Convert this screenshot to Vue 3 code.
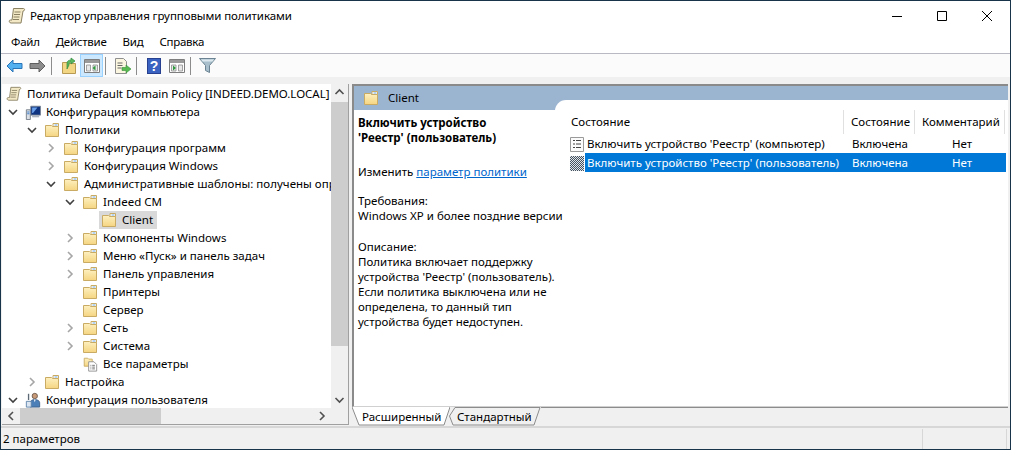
<script setup>
const menus = ['Файл', 'Действие', 'Вид', 'Справка']
const tree = [
  { d: -1, t: 'Политика Default Domain Policy [INDEED.DEMO.LOCAL]', i: 'scroll' },
  { d: 0, t: 'Конфигурация компьютера', i: 'computer', e: 'open' },
  { d: 1, t: 'Политики', i: 'folder', e: 'open' },
  { d: 2, t: 'Конфигурация программ', i: 'folder', e: 'closed' },
  { d: 2, t: 'Конфигурация Windows', i: 'folder', e: 'closed' },
  { d: 2, t: 'Административные шаблоны: получены определения политик', i: 'folder', e: 'open' },
  { d: 3, t: 'Indeed CM', i: 'folder', e: 'open' },
  { d: 4, t: 'Client', i: 'folder', sel: true },
  { d: 3, t: 'Компоненты Windows', i: 'folder', e: 'closed' },
  { d: 3, t: 'Меню «Пуск» и панель задач', i: 'folder', e: 'closed' },
  { d: 3, t: 'Панель управления', i: 'folder', e: 'closed' },
  { d: 3, t: 'Принтеры', i: 'folder' },
  { d: 3, t: 'Сервер', i: 'folder' },
  { d: 3, t: 'Сеть', i: 'folder', e: 'closed' },
  { d: 3, t: 'Система', i: 'folder', e: 'closed' },
  { d: 3, t: 'Все параметры', i: 'allset' },
  { d: 1, t: 'Настройка', i: 'folder', e: 'closed' },
  { d: 0, t: 'Конфигурация пользователя', i: 'user', e: 'open' }
]
const rows = [
  { t: "Включить устройство 'Реестр' (компьютер)", s: 'Включена', c: 'Нет', i: 'setting' },
  { t: "Включить устройство 'Реестр' (пользователь)", s: 'Включена', c: 'Нет', i: 'dither', sel: true }
]
</script>

<template>
  <div class="win">
    <svg class="defs" width="0" height="0" aria-hidden="true">
      <defs>
        <linearGradient id="fg" x1="0" y1="0" x2="0" y2="1">
          <stop offset="0" stop-color="#fdf0c0" />
          <stop offset="1" stop-color="#f5d581" />
        </linearGradient>
        <symbol id="folder" viewBox="0 0 16 16">
          <path d="M9 1.500h5.500v3H9z" fill="#fff" stroke="#c9ab63" />
          <path d="M10.500 2.500h3v1h-3z" fill="#6ba6dc" />
          <path d="M1.500 3.500h6l1 1h6v10h-13z" fill="url(#fg)" stroke="#c9ab63" />
        </symbol>
        <symbol id="scroll" viewBox="0 0 18 18">
          <path d="M5.500 1.500h10c1.500 0 1.500 2.500-.5 2.500l-2 12H3c-2 0-2.500-3-.5-3h1.500z" fill="#f3e9c6" stroke="#8a8163" />
          <path d="M6.500 5h6M6 7.500h6M5.500 10h6M5 12.500h6" stroke="#8a8163" />
        </symbol>
        <symbol id="computer" viewBox="0 0 18 18">
          <path d="M6.500 2.500h11v10h-11z" fill="#10347f" stroke="#7b8594" />
          <path d="M8 4h6l-5 6H8z" fill="#6aa0ea" />
          <path d="M8 13h8v2H8z" fill="#aab2bd" />
          <path d="M1.500 6.500h4.500v11H1.500z" fill="#dbe0e6" stroke="#6d7683" />
          <path d="M2.500 9h2.500M2.500 11h2.500" stroke="#2b6fc4" />
        </symbol>
        <symbol id="user" viewBox="0 0 18 18">
          <circle cx="11" cy="4.500" r="3" fill="#c99a78" stroke="#6d5a4d" />
          <path d="M6 17v-5c0-2 2-3.500 5-3.500s5.500 1.500 5.500 3.500v5z" fill="#4b7fb8" stroke="#3c5f87" />
          <path d="M10 8.500l1 3 1-3z" fill="#fff" />
          <path d="M1.500 10.500h5.500v6.500H1.500z" fill="#dbe6f2" stroke="#5a7fa8" />
          <path d="M4 2v7" stroke="#5d6a76" stroke-width="1.500" />
        </symbol>
        <symbol id="allset" viewBox="0 0 18 18">
          <path d="M2.500 2.500h4l1 1h4v8h-9z" fill="url(#fg)" stroke="#c9ab63" />
          <path d="M7.500 6.500h6l3 3v7.500h-9z" fill="#fff" stroke="#8d8d8d" />
          <path d="M9.500 10.500h1M11.500 10.500h3M9.500 12.500h1M11.500 12.500h3M9.500 14.500h1M11.500 14.500h3" stroke="#666" />
        </symbol>
        <symbol id="setting" viewBox="0 0 14 16">
          <path d="M.5 1.500h13v14H.5z" fill="#fbfbfb" stroke="#9a9a9a" />
          <path d="M3 4.500h2M6 4.500h5M3 8h2M6 8h5M3 11.500h2M6 11.500h5" stroke="#444" />
        </symbol>
        <pattern id="dots" width="2" height="2" patternUnits="userSpaceOnUse">
          <rect width="2" height="2" fill="#dfe4ea" />
          <rect width="1" height="1" fill="#46525e" />
          <rect x="1" y="1" width="1" height="1" fill="#46525e" />
        </pattern>
        <symbol id="dither" viewBox="0 0 14 16">
          <rect y="1" width="14" height="15" fill="url(#dots)" />
        </symbol>
      </defs>
    </svg>

    <header class="title">
      <svg class="title-ico"><use href="#scroll" /></svg>
      <span class="title-text">Редактор управления групповыми политиками</span>
      <div class="controls">
        <svg width="10" height="10" viewBox="0 0 10 10"><path d="M0 5.500h10" stroke="#000" /></svg>
        <svg width="10" height="10" viewBox="0 0 10 10"><path d="M.5.500h9v9h-9z" fill="none" stroke="#000" /></svg>
        <svg width="10" height="10" viewBox="0 0 10 10"><path d="M0 0l10 10M10 0L0 10" stroke="#000" /></svg>
      </div>
    </header>

    <nav class="menu">
      <span v-for="m in menus" :key="m">{{ m }}</span>
    </nav>

    <div class="toolbar">
      <button class="tb">
        <svg width="17" height="14" viewBox="0 0 17 14"><path d="M1 7l6-6v3.500h9v5H7V13z" fill="#52b0f0" stroke="#2a75b8" /></svg>
      </button>
      <button class="tb">
        <svg width="17" height="14" viewBox="0 0 17 14"><path d="M16 7l-6-6v3.500H1v5h9V13z" fill="#8c8c8c" stroke="#5f5f5f" /></svg>
      </button>
      <i class="sep"></i>
      <button class="tb">
        <svg width="16" height="18" viewBox="0 0 16 18"><path d="M1.500 5.500h6l1 1h6v10h-13z" fill="#f3d684" stroke="#b99a52" /><path d="M6 12V6c0-2 2-3 4-3V1l4 3-4 3V5C8 5 8 7 8 8z" fill="#5cb85c" stroke="#2e8b3e" stroke-width=".7" /></svg>
      </button>
      <button class="tb on">
        <svg width="16" height="14" viewBox="0 0 16 14"><path d="M.5.500h15v13H.5z" fill="#fff" stroke="#7e7e7e" /><path d="M1 1h14v3H1z" fill="#9a9a9a" /><path d="M2.500 6h4v6h-4zM9 6h4.500v6H9z" fill="#e8e8e8" stroke="#8d8d8d" stroke-width=".8" /><path d="M11.500 6.500v5L8.500 9z" fill="#2f9a3f" /></svg>
      </button>
      <i class="sep"></i>
      <button class="tb">
        <svg width="17" height="16" viewBox="0 0 17 16"><path d="M1.500.500h8l3 3v12h-11z" fill="#fbf6df" stroke="#8f8f8f" /><path d="M3.500 5h5M3.500 7.500h5M3.500 10h4" stroke="#666" /><path d="M8 9.500h4V7l5 4-5 4v-2.500H8z" fill="#58bb52" stroke="#3a8f3a" stroke-width=".6" /></svg>
      </button>
      <i class="sep"></i>
      <button class="tb">
        <svg width="14" height="16" viewBox="0 0 14 16"><path d="M0 0h14v16H0z" fill="#27408f" /><path d="M1 1h12v14H1z" fill="#3a62c0" /><text x="7" y="13" text-anchor="middle" class="q">?</text></svg>
      </button>
      <button class="tb">
        <svg width="16" height="14" viewBox="0 0 16 14"><path d="M.5.500h15v13H.5z" fill="#fff" stroke="#7e7e7e" /><path d="M1 1h14v3H1z" fill="#9a9a9a" /><path d="M2.500 6h4.500v6H2.500zM9.500 6h4v6h-4z" fill="#e8e8e8" stroke="#8d8d8d" stroke-width=".8" /><path d="M4 6.500v5L7 9z" fill="#2f9a3f" /></svg>
      </button>
      <i class="sep"></i>
      <button class="tb">
        <svg width="17" height="15" viewBox="0 0 17 15"><path d="M.5.500h16l-6 7v7l-4-2v-5z" fill="#a9c0cc" stroke="#6b8392" /><path d="M2 1.500h13l-1.500 2h-10z" fill="#dce8ee" /></svg>
      </button>
    </div>

    <main class="main">
      <section class="tree-pane">
        <div class="tree">
          <div
            v-for="n in tree"
            :key="n.t"
            class="node"
            :style="{ paddingLeft: Math.max(4, 19 * n.d + 4) + 'px' }"
          >
            <span v-if="n.d >= 0" class="exp">
              <svg v-if="n.e === 'open'" width="10" height="10" viewBox="0 0 10 10"><path d="M1 3l4 4 4-4" fill="none" stroke="#404040" stroke-width="1.600" /></svg>
              <svg v-else-if="n.e === 'closed'" width="10" height="10" viewBox="0 0 10 10"><path d="M3 1l4 4-4 4" fill="none" stroke="#a6a6a6" stroke-width="1.600" /></svg>
            </span>
            <span class="cell" :class="{ sel: n.sel }">
              <svg class="ico"><use :href="'#' + n.i" /></svg>
              <span class="label">{{ n.t }}</span>
            </span>
          </div>
        </div>
        <div class="vbar">
          <svg width="17" height="17" viewBox="0 0 17 17"><path d="M4.500 10l4-4 4 4" fill="none" stroke="#505050" stroke-width="1.600" /></svg>
          <div class="vtrack"><div class="vthumb"></div></div>
          <svg width="17" height="17" viewBox="0 0 17 17"><path d="M4.500 7l4 4 4-4" fill="none" stroke="#505050" stroke-width="1.600" /></svg>
        </div>
        <div class="hbar">
          <svg width="18" height="16" viewBox="0 0 18 16"><path d="M11 4L7 8l4 4" fill="none" stroke="#505050" stroke-width="1.600" /></svg>
          <div class="htrack"><div class="hthumb"></div></div>
          <svg width="18" height="16" viewBox="0 0 18 16"><path d="M7 4l4 4-4 4" fill="none" stroke="#505050" stroke-width="1.600" /></svg>
        </div>
        <div class="corner"></div>
      </section>

      <section class="right">
        <div class="pane">
          <div class="pane-head">
            <svg class="ico head-ico"><use href="#folder" /></svg>
            <span>Client</span>
          </div>
          <div class="pane-body">
            <aside class="desc">
              <p class="b">Включить устройство<br />'Реестр' (пользователь)</p>
              <p class="edit">Изменить <a class="link">параметр политики</a></p>
              <p class="req">Требования:<br />Windows XP и более поздние версии</p>
              <p>Описание:<br />Политика включает поддержку<br />устройства 'Реестр' (пользователь).<br />Если политика выключена или не<br />определена, то данный тип<br />устройства будет недоступен.</p>
            </aside>
            <div class="list">
              <div class="lhead">
                <span class="c1">Состояние</span>
                <span class="c2">Состояние</span>
                <span class="c3">Комментарий</span>
              </div>
              <div v-for="r in rows" :key="r.t" class="lrow" :class="{ sel: r.sel }">
                <svg class="lico"><use :href="'#' + r.i" /></svg>
                <div class="lcells">
                  <span class="t">{{ r.t }}</span>
                  <span class="s">{{ r.s }}</span>
                  <span class="k">{{ r.c }}</span>
                </div>
              </div>
            </div>
          </div>
        </div>
        <div class="tabs">
          <span class="tab active">
            <svg class="tab-bg" width="98" height="19" viewBox="0 0 98 19"><path d="M0 0l7 18h85l6-18" fill="#fff" stroke="#8c8c8c" /></svg>
            <span class="tab-t">Расширенный</span>
          </span>
          <span class="tab second">
            <svg class="tab-bg" width="92" height="19" viewBox="0 0 92 19"><path d="M6 .500h85L85 18H4L.5 9z" fill="#f0f0f0" stroke="#8c8c8c" /></svg>
            <span class="tab-t">Стандартный</span>
          </span>
          <span class="tab-rest"></span>
        </div>
      </section>
    </main>

    <footer class="status">
      <span class="st-main">2 параметров</span>
      <span class="st-a"></span>
      <span class="st-b"></span>
    </footer>
  </div>
</template>

<style>
html, body { margin: 0; background: #f0f0f0; }
</style>

<style scoped>
* { box-sizing: border-box; }
.defs { position: absolute; }
.win {
  width: 1011px;
  height: 450px;
  border: 1px solid #17344a;
  background: #f0f0f0;
  display: flex;
  flex-direction: column;
  font: 11.5px/18px "Noto Sans", "Open Sans", sans-serif;
  color: #000;
  overflow: hidden;
}
.title {
  height: 29px;
  background: #fff;
  display: flex;
  align-items: center;
  padding: 1px 0 0 7px;
}
.title-ico { width: 18px; height: 18px; margin-right: 4px; }
.title-text { flex: 1; letter-spacing: -0.08px; }
.controls { display: flex; gap: 35px; padding-right: 18px; }
.menu {
  height: 23px;
  background: #fff;
  display: flex;
  align-items: center;
  gap: 16px;
  padding: 1px 0 0 10px;
  letter-spacing: -0.25px;
}
.toolbar {
  height: 24px;
  background: #fbfbfb;
  border-top: 1px solid #b9b9c4;
  display: flex;
  align-items: center;
  padding-left: 2px;
}
.tb {
  width: 23px;
  height: 23px;
  padding: 0;
  background: none;
  border: 1px solid transparent;
  display: flex;
  align-items: center;
  justify-content: center;
}
.tb.on { background: #cce8ff; border-color: #99d1ff; }
.sep { width: 1px; height: 18px; background: #8c8c8c; margin: 0 5px 0 2px; }
.main { height: 342px; margin-top: 7px; display: flex; }
.tree-pane {
  width: 347px;
  height: 341px;
  display: grid;
  grid-template-columns: 329px 17px;
  grid-template-rows: 324px 16px;
  border-right: 1px solid #a0a0a0;
  border-bottom: 1px solid #a0a0a0;
  margin-left: 1px;
}
.tree { background: #fff; overflow: hidden; padding-top: 1px; }
.node { height: 18px; display: flex; white-space: nowrap; overflow: hidden; letter-spacing: 0.02px; }
.node:first-child { letter-spacing: -0.03px; }
.exp { width: 19px; flex: none; display: flex; align-items: center; padding-left: 2px; }
.cell { display: flex; align-items: center; }
.cell.sel { background: #d9d9d9; margin-left: -2px; padding: 0 4px 0 2px; }
.ico { width: 16px; height: 16px; margin-right: 5px; flex: none; }
.vbar, .hbar { background: #f0f0f0; display: flex; }
.vbar { flex-direction: column; }
.vtrack { flex: 1; padding-top: 1px; }
.vthumb { height: 244px; background: #cdcdcd; }
.hbar { align-items: center; }
.htrack { flex: 1; height: 16px; }
.hthumb { width: 141px; height: 16px; background: #cdcdcd; }
.corner { background: #f0f0f0; }
.right { width: 656px; margin-left: 3px; display: flex; flex-direction: column; }
.pane {
  height: 323px;
  background: #fff;
  border-top: 2px solid #8a8a8a;
  border-left: 2px solid #8a8a8a;
  border-bottom: 1px solid #d0d0d0;
  display: flex;
  flex-direction: column;
}
.pane-head {
  height: 24px;
  background: #9bb4d0;
  display: flex;
  align-items: center;
  padding-left: 9px;
  flex: none;
}
.head-ico { margin-right: 9px; }
.pane-body { flex: 1; display: flex; min-height: 0; }
.desc { position: relative; z-index: 1; width: 201px; padding: 5px 0 0 4px; line-height: 15px; }
.desc p { margin: 0 0 16px; white-space: nowrap; }
.desc .b { font-weight: 700; margin-bottom: 19px; }
.desc .edit { margin-bottom: 14px; }
.link { color: #0066cc; text-decoration: underline; }
.list {
  flex: 1;
  margin-top: -10px;
  background: #fff;
  border-top-left-radius: 11px;
  min-width: 0;
}
.lhead { display: flex; height: 34px; padding: 10px 0 0 16px; }
.lhead span { height: 24px; line-height: 24px; border-right: 1px solid #e0e0e0; }
.c1 { width: 273px; }
.c2 { width: 71px; padding-left: 7px; }
.c3 { width: 90px; padding-left: 7px; }
.lrow { display: flex; height: 19px; align-items: center; padding-left: 15px; }
.lico { width: 14px; height: 16px; flex: none; margin-right: 1px; }
.lcells { display: flex; width: 421px; height: 19px; align-items: center; white-space: nowrap; padding-left: 2px; }
.lrow.sel .lcells { background: #0078d7; color: #fff; }
.t { width: 265px; }
.s { width: 100px; }
.k { width: 50px; }
.tabs { height: 19px; display: flex; }
.tab { position: relative; height: 19px; display: block; flex: none; }
.tab.active { width: 98px; }
.tab.second { width: 92px; margin-left: -1px; }
.tab-bg { position: absolute; left: 0; top: 0; }
.tab-t { position: relative; display: block; line-height: 19px; padding-left: 10px; }
.second .tab-t { padding-left: 8px; }
.tab-rest { flex: 1; height: 1px; background: #8c8c8c; }
.status {
  flex: 1;
  border-top: 2px solid #d7d7d7;
  display: flex;
  padding-top: 1px;
}
.status span { line-height: 19px; }
.st-main { width: 921px; padding-left: 2px; }
.st-a { width: 85px; border-left: 1px solid #d7d7d7; border-right: 1px solid #d7d7d7; }
.q { font: 700 14px "Liberation Sans", sans-serif; fill: #fff; }
</style>
